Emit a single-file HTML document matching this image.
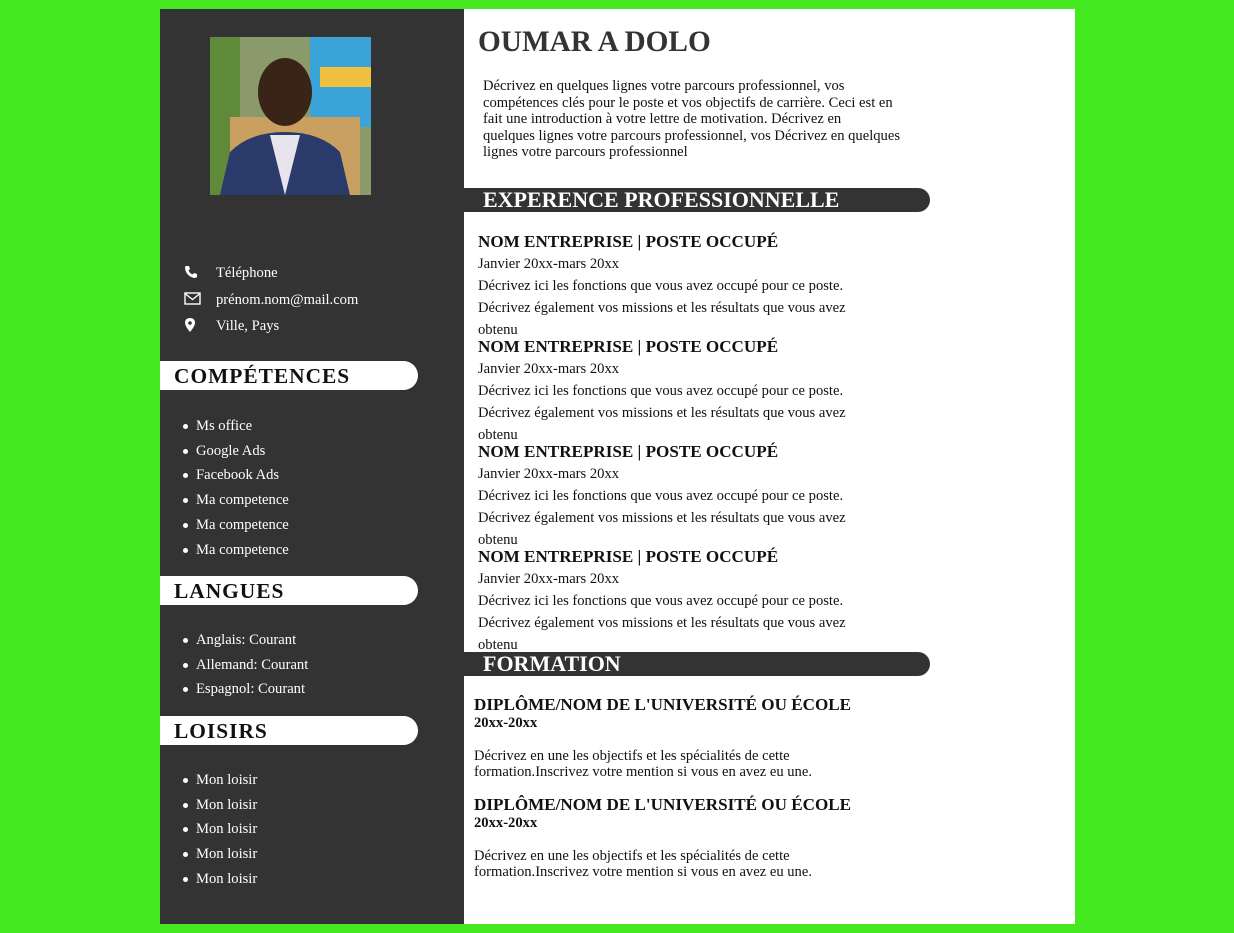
<!DOCTYPE html>
<html><head><meta charset="utf-8"><style>
*{margin:0;padding:0;box-sizing:border-box}
body{width:1234px;height:933px;background:#45e91f;font-family:"Liberation Serif",serif;position:relative;overflow:hidden}
.page{position:absolute;left:160px;top:9px;width:915px;height:915px;background:#fff}
.side{position:absolute;left:160px;top:9px;width:304px;height:915px;background:#333}
.a{position:absolute;white-space:nowrap}
.w{color:#fff;font-size:14.6px}
.sbar{position:absolute;left:160px;width:258px;height:29px;background:#fff;border-radius:0 15px 15px 0;font-size:21.4px;font-weight:bold;letter-spacing:1px;color:#111;padding-left:14px;line-height:31px}
.li{position:absolute;left:183px;color:#fff;font-size:14.6px;line-height:16px}
.li:before{content:"";position:absolute;left:0;top:6px;width:5px;height:5px;border-radius:50%;background:#fff}
.li span{margin-left:13px}
.mbar{position:absolute;left:464px;width:466px;height:24px;background:#333;border-radius:0 12px 12px 0;color:#fff;font-size:22px;font-weight:bold;padding-left:19px;line-height:24px}
.h{position:absolute;left:478px;font-size:17.1px;font-weight:bold;color:#111;line-height:18px;white-space:nowrap}
.t{position:absolute;left:478px;font-size:14.6px;color:#111;line-height:16px;white-space:nowrap;margin-top:1px}
</style></head><body>
<div class="page"></div>
<div class="side"></div>
<svg class="a" style="left:210px;top:37px" width="161" height="158" viewBox="0 0 161 158">
<rect width="161" height="158" fill="#8a9a6a"/>
<rect x="0" y="0" width="30" height="158" fill="#5e8a3a"/>
<rect x="100" y="0" width="61" height="90" fill="#3aa4d8"/>
<rect x="110" y="30" width="51" height="20" fill="#f0c040"/>
<rect x="20" y="80" width="130" height="78" fill="#c9a060"/>
<ellipse cx="75" cy="55" rx="27" ry="34" fill="#3a2418"/>
<path d="M10 158 L20 115 Q40 95 75 95 Q110 95 130 115 L140 158Z" fill="#2a3a6a"/>
<path d="M60 98 L75 158 L90 98Z" fill="#e8e4ee"/>
</svg>
<svg class="a" style="left:184px;top:265px" width="14" height="14" viewBox="0 0 14 14"><path d="M2 1 L5 1 L6 4 L4.5 5.5 Q6 8.5 8.5 9.5 L10 8 L13 9 L13 12 Q12 13 10 13 Q2 11 1 3 Q1 1 2 1Z" fill="#fff"/></svg>
<svg class="a" style="left:184px;top:292px" width="17" height="13" viewBox="0 0 17 13"><rect x="1" y="1" width="15" height="11" fill="none" stroke="#fff" stroke-width="1.4"/><path d="M1 1.5 L8.5 7.5 L16 1.5" fill="none" stroke="#fff" stroke-width="1.4"/></svg>
<svg class="a" style="left:185px;top:318px" width="10" height="14" viewBox="0 0 10 14"><path d="M5 0 Q10 0 10 5 Q10 8 5 14 Q0 8 0 5 Q0 0 5 0Z" fill="#fff"/><circle cx="5" cy="5" r="1.8" fill="#333"/></svg>
<div class="a w" style="left:216px;top:265px">Téléphone</div>
<div class="a w" style="left:216px;top:292px">prénom.nom@mail.com</div>
<div class="a w" style="left:216px;top:318px">Ville, Pays</div>
<div class="sbar" style="top:361px">COMPÉTENCES</div>
<div class="li" style="top:418px"><span>Ms office</span></div>
<div class="li" style="top:443px"><span>Google Ads</span></div>
<div class="li" style="top:467px"><span>Facebook Ads</span></div>
<div class="li" style="top:492px"><span>Ma competence</span></div>
<div class="li" style="top:517px"><span>Ma competence</span></div>
<div class="li" style="top:542px"><span>Ma competence</span></div>
<div class="sbar" style="top:576px">LANGUES</div>
<div class="li" style="top:632px"><span>Anglais: Courant</span></div>
<div class="li" style="top:657px"><span>Allemand: Courant</span></div>
<div class="li" style="top:681px"><span>Espagnol: Courant</span></div>
<div class="sbar" style="top:716px">LOISIRS</div>
<div class="li" style="top:772px"><span>Mon loisir</span></div>
<div class="li" style="top:797px"><span>Mon loisir</span></div>
<div class="li" style="top:821px"><span>Mon loisir</span></div>
<div class="li" style="top:846px"><span>Mon loisir</span></div>
<div class="li" style="top:871px"><span>Mon loisir</span></div>

<div class="a" style="left:478px;top:26px;font-size:29.3px;font-weight:bold;color:#333">OUMAR A DOLO</div>
<div class="a" style="left:483px;top:78px;font-size:14.6px;line-height:16.5px;color:#111">Décrivez en quelques lignes votre parcours professionnel, vos<br>compétences clés pour le poste et vos objectifs de carrière. Ceci est en<br>fait une introduction à votre lettre de motivation. Décrivez en<br>quelques lignes votre parcours professionnel, vos Décrivez en quelques<br>lignes votre parcours professionnel</div>
<div class="mbar" style="top:188px">EXPERENCE PROFESSIONNELLE</div>

<div class="h" style="top:233px">NOM ENTREPRISE | POSTE OCCUPÉ</div>
<div class="t" style="top:255px">Janvier 20xx-mars 20xx</div>
<div class="t" style="top:277px">Décrivez ici les fonctions que vous avez occupé pour ce poste.</div>
<div class="t" style="top:299px">Décrivez également vos missions et les résultats que vous avez</div>
<div class="t" style="top:321px">obtenu</div>
<div class="h" style="top:338px">NOM ENTREPRISE | POSTE OCCUPÉ</div>
<div class="t" style="top:360px">Janvier 20xx-mars 20xx</div>
<div class="t" style="top:382px">Décrivez ici les fonctions que vous avez occupé pour ce poste.</div>
<div class="t" style="top:404px">Décrivez également vos missions et les résultats que vous avez</div>
<div class="t" style="top:426px">obtenu</div>
<div class="h" style="top:443px">NOM ENTREPRISE | POSTE OCCUPÉ</div>
<div class="t" style="top:465px">Janvier 20xx-mars 20xx</div>
<div class="t" style="top:487px">Décrivez ici les fonctions que vous avez occupé pour ce poste.</div>
<div class="t" style="top:509px">Décrivez également vos missions et les résultats que vous avez</div>
<div class="t" style="top:531px">obtenu</div>
<div class="h" style="top:548px">NOM ENTREPRISE | POSTE OCCUPÉ</div>
<div class="t" style="top:570px">Janvier 20xx-mars 20xx</div>
<div class="t" style="top:592px">Décrivez ici les fonctions que vous avez occupé pour ce poste.</div>
<div class="t" style="top:614px">Décrivez également vos missions et les résultats que vous avez</div>
<div class="t" style="top:636px">obtenu</div>
<div class="mbar" style="top:652px">FORMATION</div>

<div class="h" style="left:474px;top:696px">DIPLÔME/NOM DE L'UNIVERSITÉ OU ÉCOLE</div>
<div class="t" style="left:474px;top:714px;font-weight:bold">20xx-20xx</div>
<div class="t" style="left:474px;top:747px">Décrivez en une les objectifs et les spécialités de cette</div>
<div class="t" style="left:474px;top:763px">formation.Inscrivez votre mention si vous en avez eu une.</div>
<div class="h" style="left:474px;top:796px">DIPLÔME/NOM DE L'UNIVERSITÉ OU ÉCOLE</div>
<div class="t" style="left:474px;top:814px;font-weight:bold">20xx-20xx</div>
<div class="t" style="left:474px;top:847px">Décrivez en une les objectifs et les spécialités de cette</div>
<div class="t" style="left:474px;top:863px">formation.Inscrivez votre mention si vous en avez eu une.</div>
</body></html>
